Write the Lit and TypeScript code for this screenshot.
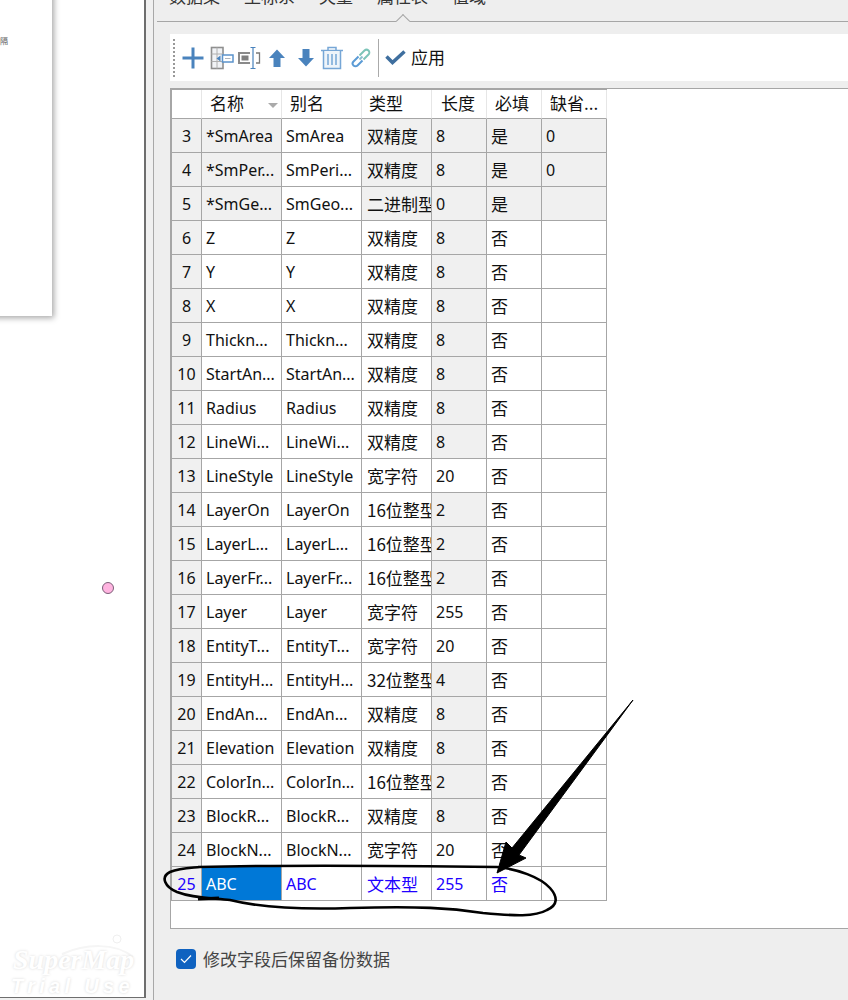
import { LitElement, html, css, svg } from "lit";
import { customElement } from "lit/decorators.js";

type Row = [string, string, string, string, string, string, string?];
const D = "双精度", W = "宽字符", I = "16位整型";
const rows: Row[] = [
  ["3", "*SmArea", "SmArea", D, "8", "是", "0"],
  ["4", "*SmPer...", "SmPeri...", D, "8", "是", "0"],
  ["5", "*SmGe...", "SmGeo...", "二进制型", "0", "是", ""],
  ["6", "Z", "Z", D, "8", "否"],
  ["7", "Y", "Y", D, "8", "否"],
  ["8", "X", "X", D, "8", "否"],
  ["9", "Thickn...", "Thickn...", D, "8", "否"],
  ["10", "StartAn...", "StartAn...", D, "8", "否"],
  ["11", "Radius", "Radius", D, "8", "否"],
  ["12", "LineWi...", "LineWi...", D, "8", "否"],
  ["13", "LineStyle", "LineStyle", W, "20", "否"],
  ["14", "LayerOn", "LayerOn", I, "2", "否"],
  ["15", "LayerL...", "LayerL...", I, "2", "否"],
  ["16", "LayerFr...", "LayerFr...", I, "2", "否"],
  ["17", "Layer", "Layer", W, "255", "否"],
  ["18", "EntityT...", "EntityT...", W, "20", "否"],
  ["19", "EntityH...", "EntityH...", "32位整型", "4", "否"],
  ["20", "EndAn...", "EndAn...", D, "8", "否"],
  ["21", "Elevation", "Elevation", D, "8", "否"],
  ["22", "ColorIn...", "ColorIn...", I, "2", "否"],
  ["23", "BlockR...", "BlockR...", D, "8", "否"],
  ["24", "BlockN...", "BlockN...", W, "20", "否"],
];

@customElement("app-root")
export class AppRoot extends LitElement {
  static styles = css`
    :host { display: block; width: 848px; height: 1000px; overflow: hidden; position: relative; background: #f0f0f0;
      font-family: "Noto Sans", "Noto Sans CJK SC", sans-serif; color: #111; }
    .page { display: flex; height: 1000px; }
    .canvas { width: 144px; height: 997px; flex: none; position: relative; background: #fff; border-right: 2px solid #6e6e6e; border-bottom: 1px solid #6e6e6e; overflow: hidden; }
    .paper { position: absolute; left: -20px; top: -10px; width: 72px; height: 326px; background: #fff; box-shadow: 2px 2px 6px rgba(0,0,0,.35); }
    .tiny { position: absolute; left: 0; top: 36px; font-size: 8px; line-height: 10px; color: #555; }
    .dot { position: absolute; left: 102px; top: 582px; width: 10px; height: 10px; border-radius: 50%; background: #ffb4e0; border: 1px solid #7c5f78; }
    .wm { position: absolute; left: 13px; top: 945px; color: #fff; font-family: "Liberation Serif", serif; font-style: italic; font-weight: 700; font-size: 28px; line-height: 30px; text-shadow: 0 0 3px #d8d8d8; white-space: nowrap; }
    .wm2 { position: absolute; left: 11px; top: 974px; color: #fff; font-family: "Liberation Sans", sans-serif; font-style: italic; font-weight: 700; font-size: 20px; line-height: 24px; letter-spacing: 4.300px; text-shadow: 0 0 3px #d8d8d8; white-space: nowrap; }
    .arc { position: absolute; left: 0; top: 930px; }
    .gap { width: 7px; flex: none; background: #f0f0f0; border-right: 1px solid #a8a8a8; }
    .panel { flex: 1; background: #eeeeee; padding-left: 16px; min-width: 0; display: flex; flex-direction: column; position: relative; }
    .tabs { height: 21px; margin-left: -13px; padding-left: 12px; border-bottom: 1px solid #a6a6a6; display: flex; gap: 24px; align-items: flex-start; position: relative; font-family: "Noto Sans CJK SC", sans-serif; font-size: 17px; color: #333; }
    .tabs span { margin-top: -16px; line-height: 24px; white-space: nowrap; }
    .notch { position: absolute; left: 241px; top: 16px; width: 9px; height: 9px; background: #eee; border-left: 1px solid #a6a6a6; border-top: 1px solid #a6a6a6; transform: rotate(45deg); }
    .toolbar { margin-top: 12px; height: 47px; background: #fff; display: flex; align-items: center; font-size: 17px; font-family: "Noto Sans CJK SC", sans-serif; position: relative; }
    .grip { width: 2px; height: 38px; margin-left: 3px; background-image: linear-gradient(#999 50%, transparent 50%); background-size: 2px 4px; }
    .toolbar svg { display: block; flex: none; }
    .sep { width: 1px; height: 38px; background: #aaa; margin: 0 6px 0 7px; }
    .apply { margin-left: 5px; margin-top: -2px; }
    .tablewrap { margin-top: 7px; height: 841px; background: #fff; border: 1px solid #a6a6a6; border-right: 0; box-sizing: border-box; }
    .grid { display: grid; grid-template-columns: 30px 80px 80px 70px 55px 55px 65px; width: 435px; border-top: 1px solid #a6a6a6; border-left: 1px solid #a6a6a6; box-sizing: content-box; }
    .c { height: 33px; border-right: 1px solid #a6a6a6; border-bottom: 1px solid #a6a6a6; padding-left: 4px; line-height: 35px; font-size: 16px; white-space: nowrap; overflow: hidden; box-sizing: content-box; width: calc(100% - 5px); }
    .zh { font-family: "Noto Sans CJK SC", sans-serif; font-size: 17px; line-height: 33px; }
    .ty { padding-left: 5px; width: calc(100% - 6px); }
    .g { background: #f0f0f0; }
    .idx { padding-left: 0; width: calc(100% - 1px); text-align: center; background: #f0f0f0; }
    .h { height: 28px; line-height: 26px; padding-left: 8px; width: calc(100% - 9px); background: #fff; border-right: 1px solid #e6e6e6; border-bottom: 1px solid #a6a6a6; font-family: "Noto Sans CJK SC", sans-serif; font-size: 17px; position: relative; }
    .h:nth-child(4) { padding-left: 7px; width: calc(100% - 8px); }
    .h:nth-child(5) { padding-left: 9px; width: calc(100% - 10px); }
    .arrow { position: absolute; right: 3px; top: 13px; width: 0; height: 0; border-left: 5px solid transparent; border-right: 5px solid transparent; border-top: 5px solid #aaa; }
    .sel { background: #0078d7; color: #fff; }
    .blue { color: #2000ff; }
    .foot { display: flex; align-items: center; gap: 7px; margin-top: 19px; padding-left: 6px; font-family: "Noto Sans CJK SC", sans-serif; font-size: 17px; color: #444; line-height: 22px; }
    .box { width: 20px; height: 20px; border-radius: 4px; background: #0f62c0; display: flex; align-items: center; justify-content: center; }
    .ink { position: absolute; left: 0; top: 0; pointer-events: none; }
    .m4 { margin-left: 4px; } .m5 { margin-left: 5px; } .m6 { margin-left: 6px; } .m7 { margin-left: 7px; } .m13 { margin-left: 13px; }
  `;

  private iconPlus() {
    return html`<svg class="m6" width="24" height="24" viewBox="0 0 24 24"><path d="M12 1.500v21M1.500 12h21" stroke="#4a83bd" stroke-width="3"/></svg>`;
  }
  private iconCols() {
    return html`<svg class="m5" width="24" height="24" viewBox="0 0 24 24"><rect x="1.500" y="1.500" width="11.500" height="21" fill="#f1f3f6" stroke="#8f8f8f" stroke-width="1.600"/><path d="M1.500 8h11.500M1.500 15.500h11.500M7 1.500v21" stroke="#b0b0b0"/><path d="M6.500 12.500l4-3v6z" fill="#4a83bd"/><rect x="12.500" y="9" width="10.500" height="7" fill="#fff" stroke="#5b93cb" stroke-width="1.500"/><path d="M15 12.500h5.500" stroke="#aeb4bc"/></svg>`;
  }
  private iconField() {
    return html`<svg class="m4" width="24" height="24" viewBox="0 0 24 24"><path d="M12 7H1v10h11" fill="none" stroke="#8a8a8a" stroke-width="2"/><rect x="3.500" y="9.500" width="7" height="5" fill="#7f7f7f"/><path d="M18 7h3.500v10H18" fill="none" stroke="#7a7a7a" stroke-width="1.300"/><path d="M12.500 1.500h5M15 1.500v21M12.500 22.500h5" fill="none" stroke="#4a83bd" stroke-width="1.200"/></svg>`;
  }
  private iconUp() {
    return html`<svg class="m7" width="16" height="18" viewBox="0 0 16 18"><path d="M8 .5L16 9h-4.500v9h-7V9H0z" fill="#4a83bd"/></svg>`;
  }
  private iconDown() {
    return html`<svg class="m13" width="16" height="18" viewBox="0 0 16 18"><path d="M8 17.500L0 9h4.500V0h7v9H16z" fill="#4a83bd"/></svg>`;
  }
  private iconTrash() {
    return html`<svg class="m6" width="24" height="24" viewBox="0 0 24 24"><path d="M1 4.500h22M8 4V1.500h8V4" fill="none" stroke="#76a6d6" stroke-width="1.500"/><path d="M3.500 5v17.500h17V5" fill="#eef4fa" stroke="#76a6d6" stroke-width="1.500"/><path d="M8 8v11M12 8v11M16 8v11" stroke="#76a6d6" stroke-width="1.500"/></svg>`;
  }
  private iconLink() {
    return html`<svg class="m7" width="20" height="20" viewBox="0 0 20 20"><path d="M8.500 11.500l3-3" stroke="#8bbfcf" stroke-width="2"/><path d="M7.500 8.500l-5 5a2.800 2.800 0 0 0 4 4l5-5" fill="none" stroke="#5b9bd5" stroke-width="2"/><path d="M12.500 11.500l5-5a2.800 2.800 0 0 0-4-4l-5 5" fill="none" stroke="#7cc4b8" stroke-width="2"/></svg>`;
  }
  private iconCheck() {
    return html`<svg width="21" height="15" viewBox="0 0 21 15"><path d="M1.500 6.500l6 6L19.500 1.500" fill="none" stroke="#3f6f9f" stroke-width="3.500"/></svg>`;
  }

  private cell(r: Row, i: number) {
    const t = r[i] ?? "";
    const top = parseInt(r[0]) <= 5;
    let cls = "c";
    if (i === 0) cls += " idx";
    if (i === 3 || i === 5) cls += " zh";
    if (i === 3) cls += " ty";
    if (top && i !== 2) cls += " g";
    if (i === 4 && r[3] !== W) cls += " g";
    return html`<div class=${cls}>${t}</div>`;
  }

  render() {
    const head = ["", "名称", "别名", "类型", "长度", "必填", "缺省..."];
    return html`
      <div class="page">
        <div class="canvas">
          <div class="paper"></div>
          <div class="tiny">隔</div>
          <div class="dot"></div>
          <svg class="arc" width="144" height="50" viewBox="0 0 144 50" fill="none">
            <path d="M62 24C85 14 115 12 133 27" stroke="#f5f5f5" stroke-width="2"/>
            <circle cx="117" cy="9" r="4" fill="#fff" stroke="#efefef"/>
          </svg>
          <div class="wm">SuperMap</div>
          <div class="wm2">Trial Use</div>
        </div>
        <div class="gap"></div>
        <div class="panel">
          <div class="tabs">
            <span>数据集</span><span>坐标系</span><span>矢量</span><span>属性表</span><span>值域</span>
            <div class="notch"></div>
          </div>
          <div class="toolbar">
            <div class="grip"></div>
            ${this.iconPlus()}${this.iconCols()}${this.iconField()}${this.iconUp()}${this.iconDown()}${this.iconTrash()}${this.iconLink()}
            <div class="sep"></div>
            ${this.iconCheck()}
            <span class="apply">应用</span>
          </div>
          <div class="tablewrap">
            <div class="grid">
              ${head.map((h, i) => html`<div class="c h">${h}${i === 1 ? html`<span class="arrow"></span>` : ""}</div>`)}
              ${rows.map((r) => [0, 1, 2, 3, 4, 5, 6].map((i) => this.cell(r, i)))}
              <div class="c idx blue">25</div>
              <div class="c sel">ABC</div>
              <div class="c blue">ABC</div>
              <div class="c zh ty blue">文本型</div>
              <div class="c blue">255</div>
              <div class="c zh blue">否</div>
              <div class="c"></div>
            </div>
          </div>
          <div class="foot">
            <div class="box"><svg width="12" height="10" viewBox="0 0 12 10"><path d="M1 5l3.500 3.500L11 1.500" fill="none" stroke="#fff" stroke-width="1.200"/></svg></div>
            <span>修改字段后保留备份数据</span>
          </div>
        </div>
      </div>
      <svg class="ink" width="848" height="1000" viewBox="0 0 848 1000" fill="none">
        ${svg`<path d="M633 700L519 855L526 858L497 873L506 842L512 848Z" fill="#000" stroke="#000" stroke-width="1" stroke-linejoin="round"/>
        <path d="M198 867C280 865 420 866 497 867C517 869 540 877 550 888C558 897 558 905 547 910C535 917 515 916 483 913C450 908 420 906 350 908C290 910 250 905 230 900C215 898 195 899 177 892C165 887 160 877 170 872C180 868 190 868 200 867" stroke="#000" stroke-width="2.600"/>
        <path d="M198 899L219 898" stroke="#000" stroke-width="3"/>`}
      </svg>
    `;
  }
}
